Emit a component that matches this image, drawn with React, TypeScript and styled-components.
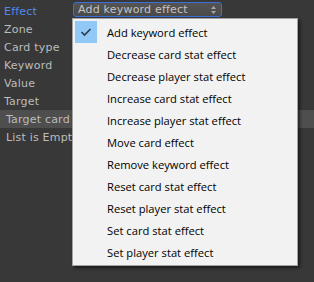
import React from "react";
import styled, { createGlobalStyle } from "styled-components";

const Global = createGlobalStyle`
  html, body { margin: 0; padding: 0; background: #383838; }
  body { width: 314px; height: 282px; overflow: hidden; }
`;

const Page = styled.div`
  position: relative;
  width: 314px;
  height: 282px;
  background: #383838;
  font-family: "DejaVu Sans", sans-serif;
  font-size: 11px;
`;

const Fields = styled.div`
  display: flex;
  flex-direction: column;
  padding-top: 2px;
`;

const Row = styled.div<{ $selected?: boolean; $indent?: boolean }>`
  display: flex;
  align-items: center;
  height: 18px;
  padding-left: ${(p) => (p.$indent ? "6px" : "4px")};
  background: ${(p) => (p.$selected ? "#4e4e4e" : "transparent")};
`;

const Label = styled.span<{ $active?: boolean }>`
  width: 69px;
  color: ${(p) => (p.$active ? "#5288f0" : "#bcbcbc")};
  white-space: nowrap;
  letter-spacing: 0.2px;
`;

const Dropdown = styled.div`
  box-sizing: border-box;
  display: flex;
  align-items: center;
  justify-content: space-between;
  align-self: flex-start;
  width: 149px;
  height: 15px;
  padding: 0 5px 0 4px;
  border: 1px solid #3e6fd8;
  border-radius: 3px;
  background: linear-gradient(#545454, #4a4a4a);
  color: #c4c4c4;
  letter-spacing: 0.2px;
`;

const Arrows = styled.svg`
  width: 5px;
  height: 8px;
`;

const Menu = styled.div`
  position: absolute;
  left: 72px;
  top: 18px;
  width: 226px;
  box-sizing: border-box;
  padding: 2px 2px 2px 2px;
  background: #f2f2f2;
  border: 1px solid #a3a3a3;
  box-shadow: 2px 2px 3px rgba(0, 0, 0, 0.55);
  font-family: "Open Sans", "Noto Sans", sans-serif;
  font-size: 11.2px;
  color: #000;
`;

const Item = styled.div`
  display: flex;
  align-items: center;
  height: 22px;
`;

const CheckBox = styled.div<{ $on?: boolean }>`
  width: 22px;
  height: 22px;
  display: flex;
  align-items: center;
  justify-content: center;
  background: ${(p) => (p.$on ? "#90c8f6" : "transparent")};
  margin-right: 10px;
`;

const ItemText = styled.span`
  white-space: nowrap;
`;

const fields = ["Effect", "Zone", "Card type", "Keyword", "Value", "Target", "Target card", "List is Empty"];

const options = [
  "Add keyword effect",
  "Decrease card stat effect",
  "Decrease player stat effect",
  "Increase card stat effect",
  "Increase player stat effect",
  "Move card effect",
  "Remove keyword effect",
  "Reset card stat effect",
  "Reset player stat effect",
  "Set card stat effect",
  "Set player stat effect",
];

export default function App() {
  return (
    <Page>
      <Global />
      <Fields>
        {fields.map((f, i) => (
          <Row key={f} $selected={f === "Target card"} $indent={i >= 6}>
            <Label $active={i === 0}>{f}</Label>
            {i === 0 && (
              <Dropdown>
                <span>Add keyword effect</span>
                <Arrows viewBox="0 0 5 8">
                  <path d="M2.5 0 L5 3 L0 3 Z M0 5 L5 5 L2.5 8 Z" fill="#a8a8a8" />
                </Arrows>
              </Dropdown>
            )}
          </Row>
        ))}
      </Fields>
      <Menu>
        {options.map((o, i) => (
          <Item key={o}>
            <CheckBox $on={i === 0}>
              {i === 0 && (
                <svg width="12" height="10" viewBox="0 0 12 10">
                  <path d="M1.5 5 L4.5 8 L10.5 2" stroke="#2a3b4f" strokeWidth="1.6" fill="none" />
                </svg>
              )}
            </CheckBox>
            <ItemText>{o}</ItemText>
          </Item>
        ))}
      </Menu>
    </Page>
  );
}
